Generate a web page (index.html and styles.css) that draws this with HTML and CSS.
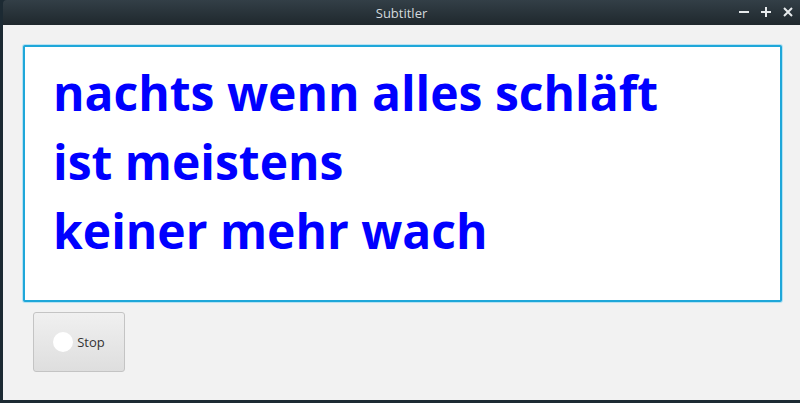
FILE: index.html
```html
<!DOCTYPE html>
<html>
<head>
<meta charset="utf-8">
<link rel="stylesheet" href="styles.css">
</head>
<body>
<div class="window">
  <div class="titlebar">
    <span class="title">Subtitler</span>
    <div class="controls">
      <svg width="12" height="12" viewBox="0 0 12 12"><path d="M1 6h10" stroke="#e6eaec" stroke-width="2"/></svg>
      <svg width="12" height="12" viewBox="0 0 12 12"><path d="M1 6h10M6 1v10" stroke="#e6eaec" stroke-width="2"/></svg>
      <svg width="12" height="12" viewBox="0 0 12 12"><path d="M2 2l8 8M10 2l-8 8" stroke="#e6eaec" stroke-width="2"/></svg>
    </div>
  </div>
  <div class="content">
    <div class="textbox">
      <p class="line">nachts wenn alles schläft</p>
      <p class="line">ist meistens</p>
      <p class="line">keiner mehr wach</p>
    </div>
    <button class="btn"><span class="dot"></span><span>Stop</span></button>
  </div>
</div>
</body>
</html>
```
FILE: styles.css
```css
html, body { margin: 0; padding: 0; }
body { width: 800px; height: 403px; overflow: hidden; background: #1c2a33; font-family: "Noto Sans", "Open Sans", sans-serif; }
.window { display: flex; flex-direction: column; height: 400px; margin-left: 3px; }
.titlebar {
  height: 25px; flex: none; position: relative;
  background: linear-gradient(#333f47, #1f282d);
  display: flex; align-items: center; justify-content: center;
  border-top-left-radius: 4px;
}
.title { color: #d4dadd; font-size: 13px; font-family: "Open Sans", "Noto Sans", sans-serif; }
.controls { position: absolute; right: 6px; top: 6px; display: flex; gap: 10px; }
.controls svg { display: block; }
.content { flex: 1; background: #f2f2f2; padding: 20px 19px 0 20px; display: flex; flex-direction: column; align-items: flex-start; }
.textbox {
  box-sizing: border-box; width: 759px; height: 257px;
  background: #fff; border: 2px solid #1fa7d9; border-radius: 2px;
  padding: 11px 28px; box-shadow: 0 0 0 1px #b8e2f2;
}
.line { margin: 0; color: #0000ff; font-weight: 700; font-size: 48px; line-height: 69px; font-family: "Open Sans", "Noto Sans", sans-serif; }
.btn {
  margin: 10px 0 0 10px; width: 92px; height: 60px;
  border: 1px solid #c4c4c4; border-radius: 3px;
  background: linear-gradient(#f0f0f0, #dedede);
  display: flex; align-items: center; justify-content: center; gap: 4px; padding: 0;
  font-family: "Open Sans", "Noto Sans", sans-serif; font-size: 13px; color: #333;
}
.dot { width: 20px; height: 20px; border-radius: 50%; background: #fff; }
```
